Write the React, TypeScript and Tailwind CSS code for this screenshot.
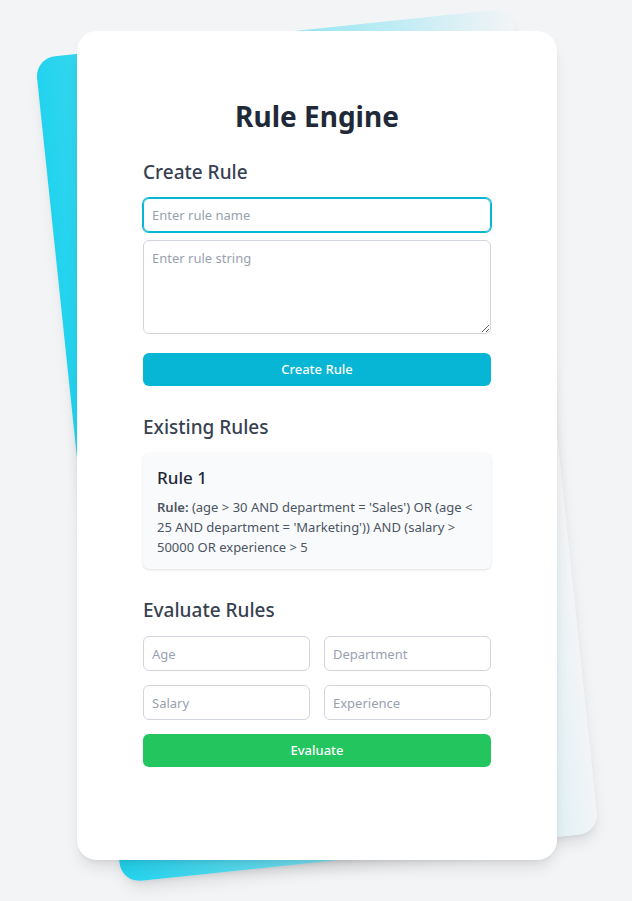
import React, { useState } from 'react';

const rules = [
  {
    id: 1,
    name: 'Rule 1',
    text: "(age > 30 AND department = 'Sales') OR (age < 25 AND department = 'Marketing')) AND (salary > 50000 OR experience > 5",
  },
];

export default function App() {
  const [ruleName, setRuleName] = useState('');
  const [ruleString, setRuleString] = useState('');
  const [data, setData] = useState({ age: '', department: '', salary: '', experience: '' });

  const field =
    'w-full h-[35px] px-2 border border-gray-300 rounded-md text-[13px] text-gray-700 placeholder:text-gray-400 focus:outline-none focus:border-[#06b6d4]';

  return (
    <div className="min-h-screen bg-[#f3f4f6] flex justify-center pl-[2px] pt-[31px] pb-[41px] font-['Noto_Sans',sans-serif]">
      <div className="relative w-[480px]">
        {/* tilted backdrop */}
        <div className="absolute inset-0 bg-linear-to-r from-[#22d3ee] shadow-lg -rotate-6 rounded-[20px]"></div>

        <div className="relative bg-white shadow-lg rounded-[20px] px-[66px] pt-[67px] pb-[93px]">
          <h1 className="text-[28px] leading-9 font-bold text-[#1f2937] text-center">Rule Engine</h1>

          {/* Create */}
          <h2 className="mt-6 text-[19px] leading-7 font-medium text-[#374151]">Create Rule</h2>
          <input
            type="text"
            value={ruleName}
            onChange={(e) => setRuleName(e.target.value)}
            placeholder="Enter rule name"
            className="mt-3 block w-full h-[34px] px-2 border border-[#06b6d4] ring-1 ring-[#06b6d4] rounded-md text-[13px] text-gray-700 placeholder:text-gray-400 focus:outline-none"
          />
          <textarea
            value={ruleString}
            onChange={(e) => setRuleString(e.target.value)}
            placeholder="Enter rule string"
            className="mt-2 block w-full h-[94px] p-2 border border-gray-300 rounded-md text-[13px] text-gray-700 placeholder:text-gray-400 focus:outline-none focus:border-[#06b6d4]"
          />
          <button className="mt-[19px] w-full h-[33px] bg-[#06b6d4] hover:bg-[#0891b2] text-white text-[13px] font-medium rounded-md">
            Create Rule
          </button>

          {/* Existing */}
          <h2 className="mt-[27px] text-[19px] leading-7 font-medium text-[#374151]">Existing Rules</h2>
          <div className="mt-3 space-y-3">
            {rules.map((r) => (
              <div key={r.id} className="bg-[#f9fafb] rounded-md shadow-sm px-[14px] pt-[13px] pb-3">
                <h3 className="text-[17px] leading-6 font-medium text-[#1f2937]">{r.name}</h3>
                <p className="mt-[7px] text-[13px] leading-5 text-[#4b5563]">
                  <span className="font-semibold">Rule:</span> {r.text}
                </p>
              </div>
            ))}
          </div>

          {/* Evaluate */}
          <h2 className="mt-[27px] text-[19px] leading-7 font-medium text-[#374151]">Evaluate Rules</h2>
          <div className="mt-3 grid grid-cols-2 gap-[14px]">
            <input className={field} placeholder="Age" value={data.age} onChange={(e) => setData({ ...data, age: e.target.value })} />
            <input className={field} placeholder="Department" value={data.department} onChange={(e) => setData({ ...data, department: e.target.value })} />
            <input className={field} placeholder="Salary" value={data.salary} onChange={(e) => setData({ ...data, salary: e.target.value })} />
            <input className={field} placeholder="Experience" value={data.experience} onChange={(e) => setData({ ...data, experience: e.target.value })} />
          </div>
          <button className="mt-[14px] w-full h-[33px] bg-[#22c55e] hover:bg-[#16a34a] text-white text-[13px] font-medium rounded-md">
            Evaluate
          </button>
        </div>
      </div>
    </div>
  );
}
